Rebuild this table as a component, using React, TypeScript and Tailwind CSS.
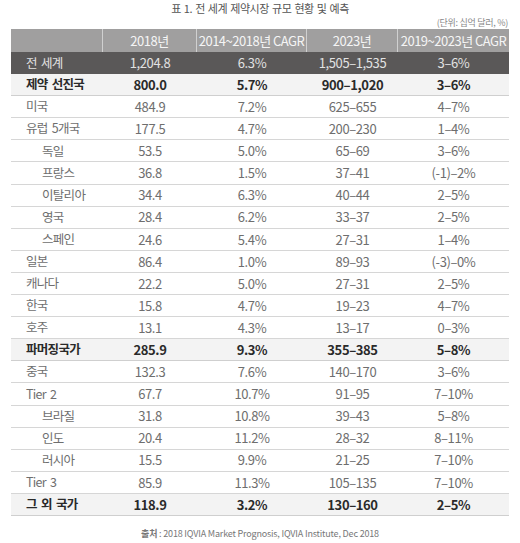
import React from "react";

type Row = {
  name: string;
  v: [string, string, string, string];
  kind?: "total" | "bold" | "sub" | "normal";
};

const rows: Row[] = [
  { name: "전 세계", v: ["1,204.8", "6.3%", "1,505–1,535", "3–6%"], kind: "total" },
  { name: "제약 선진국", v: ["800.0", "5.7%", "900–1,020", "3–6%"], kind: "bold" },
  { name: "미국", v: ["484.9", "7.2%", "625–655", "4–7%"] },
  { name: "유럽 5개국", v: ["177.5", "4.7%", "200–230", "1–4%"] },
  { name: "독일", v: ["53.5", "5.0%", "65–69", "3–6%"], kind: "sub" },
  { name: "프랑스", v: ["36.8", "1.5%", "37–41", "(-1)–2%"], kind: "sub" },
  { name: "이탈리아", v: ["34.4", "6.3%", "40–44", "2–5%"], kind: "sub" },
  { name: "영국", v: ["28.4", "6.2%", "33–37", "2–5%"], kind: "sub" },
  { name: "스페인", v: ["24.6", "5.4%", "27–31", "1–4%"], kind: "sub" },
  { name: "일본", v: ["86.4", "1.0%", "89–93", "(-3)–0%"] },
  { name: "캐나다", v: ["22.2", "5.0%", "27–31", "2–5%"] },
  { name: "한국", v: ["15.8", "4.7%", "19–23", "4–7%"] },
  { name: "호주", v: ["13.1", "4.3%", "13–17", "0–3%"] },
  { name: "파머징국가", v: ["285.9", "9.3%", "355–385", "5–8%"], kind: "bold" },
  { name: "중국", v: ["132.3", "7.6%", "140–170", "3–6%"] },
  { name: "Tier 2", v: ["67.7", "10.7%", "91–95", "7–10%"] },
  { name: "브라질", v: ["31.8", "10.8%", "39–43", "5–8%"], kind: "sub" },
  { name: "인도", v: ["20.4", "11.2%", "28–32", "8–11%"], kind: "sub" },
  { name: "러시아", v: ["15.5", "9.9%", "21–25", "7–10%"], kind: "sub" },
  { name: "Tier 3", v: ["85.9", "11.3%", "105–135", "7–10%"] },
  { name: "그 외 국가", v: ["118.9", "3.2%", "130–160", "2–5%"], kind: "bold" },
];

export default function App() {
  return (
    <div
      className="w-[520px] h-[543px] bg-white flex flex-col"
      style={{ fontFamily: '"Noto Sans CJK KR", sans-serif' }}
    >
      <div className="h-[16px] leading-[16px] text-center text-[11px] text-[#555] tracking-[-0.04em] [word-spacing:1px]">
        표 1. 전 세계 제약시장 규모 현황 및 예측
      </div>
      <div className="h-[13px] leading-[13px] text-right pr-[12px] text-[9px] text-[#888] tracking-[-0.03em]">
        (단위: 십억 달러, %)
      </div>
      <div className="mx-[11px] w-[498px] flex flex-col text-[13px] tracking-[-0.4px] whitespace-nowrap">
        <div className="h-[23px] flex bg-[#a09f9f] text-[#f5f5f5] tracking-[-0.5px]">
          <div className="w-[92px] border-r border-[#d0d0d0]" />
          <div className="w-[94px] border-r border-[#d0d0d0] flex items-center justify-center">2018년</div>
          <div className="w-[110px] border-r border-[#d0d0d0] flex items-center justify-center">2014~2018년 CAGR</div>
          <div className="w-[91px] border-r border-[#d0d0d0] flex items-center justify-center">2023년</div>
          <div className="w-[111px] flex items-center justify-center">2019~2023년 CAGR</div>
        </div>
        {rows.map((r, i) => {
          const kind = r.kind ?? "normal";
          const rowCls =
            kind === "total"
              ? "bg-[#5a5858] text-[#e2e2e2]"
              : kind === "bold"
              ? "bg-[#f3f3f3] text-[#2a2a2a] font-bold border-b border-[#cfcfcf]"
              : "bg-white text-[#6e6e6e] border-b border-[#d6d6d6]";
          return (
            <div key={i} className={`h-[22.1px] flex items-center ${rowCls}`}>
              <div
                className={`w-[92px] text-[12.5px] tracking-[-0.7px] [word-spacing:2px] ${
                  kind === "sub" ? "pl-[31px]" : "pl-[15px]"
                }`}
              >
                {r.name}
              </div>
              <div className="w-[94px] text-center">{r.v[0]}</div>
              <div className="w-[110px] text-center">{r.v[1]}</div>
              <div className="w-[91px] text-center">{r.v[2]}</div>
              <div className="w-[111px] text-center">{r.v[3]}</div>
            </div>
          );
        })}
      </div>
      <div className="pt-[10px] leading-[16px] text-center text-[9px] text-[#777] tracking-[-0.02em]">
        <span className="font-bold">출처</span> : 2018 IQVIA Market Prognosis, IQVIA Institute, Dec 2018
      </div>
    </div>
  );
}
